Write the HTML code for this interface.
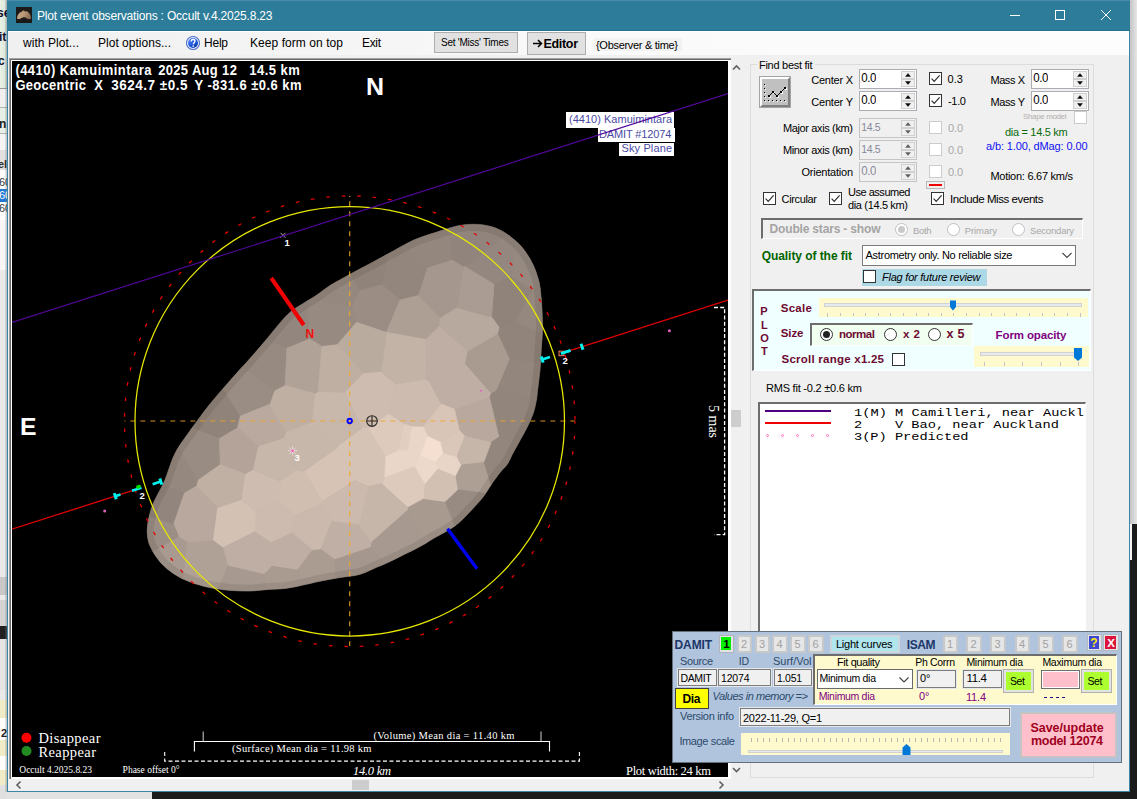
<!DOCTYPE html>
<html><head><meta charset="utf-8"><title>Plot event observations : Occult v.4.2025.8.23</title>
<style>
html,body{margin:0;padding:0;background:#1a1a1a;}
#root{position:relative;width:1137px;height:799px;overflow:hidden;font-family:"Liberation Sans",sans-serif;font-size:11px;color:#000;background:#1b1b1b;}
#root div,#root span,#root svg{position:absolute;box-sizing:border-box;}
#root span{white-space:pre;}

.b{border:1px solid #adadad;background:#e1e1e1;}
.ud{background:#fff;border:1px solid #abadb3;}
.udd{background:#f0f0f0;border:1px solid #c4c4c4;}
.sp{background:#f0f0f0;border:1px solid #d0d0d0;}
.cb{width:13px;height:13px;background:#fff;border:1px solid #333;}
.cbd{width:13px;height:13px;background:#fff;border:1px solid #ccc;}
.rb{width:13px;height:13px;background:#fff;border:1px solid #333;border-radius:50%;}
.rbd{width:13px;height:13px;background:#fff;border:1px solid #c0c0c0;border-radius:50%;}
.sunk{border-style:solid;border-width:2px 1px 1px 2px;border-color:#6d6d6d #fff #fff #6d6d6d;}
.tk{background:#c4c4c4;width:1px;}
.tb{background:#f0f0f0;border:1px solid #7c7c7c;box-shadow:0 0 0 1px #e4e7ec;}
.nb{background:#e6e6e6;border:2px solid #c6c8ca;}

</style></head><body><div id="root">
<div style="left:1130px;top:0px;width:7px;height:524px;background:linear-gradient(to right,#c4c4c4,#e6e6e6);"></div>
<div style="left:1130px;top:524px;width:2px;height:36px;background:#f4f4f4;"></div>
<div style="left:0px;top:792px;width:152px;height:7px;background:#e2e2e2;"></div>
<div style="left:0px;top:0px;width:7px;height:799px;background:#e9e9e9;"></div>
<div style="left:0px;top:0px;width:7px;height:88px;background:linear-gradient(to right,#eaf2e6,#dfe8dc 70%,#c8d4cc);"></div>
<div style="left:0px;top:88px;width:7px;height:1px;background:#9a9a9a;"></div>
<div style="left:0px;top:89px;width:7px;height:18px;background:#efefef;"></div>
<div style="left:0px;top:107px;width:7px;height:1px;background:#b0b0b0;"></div>
<div style="left:0px;top:108px;width:7px;height:25px;background:#e8efe4;"></div>
<div style="left:0px;top:133px;width:7px;height:1px;background:#b0b0b0;"></div>
<div style="left:0px;top:134px;width:7px;height:16px;background:#f4f4f4;"></div>
<div style="left:0px;top:150px;width:7px;height:20px;background:#e0e0e0;"></div>
<div style="left:0px;top:170px;width:7px;height:19px;background:#fff;"></div>
<div style="left:0px;top:189px;width:7px;height:13px;background:#1e78d2;"></div>
<div style="left:0px;top:202px;width:7px;height:18px;background:#fff;"></div>
<div style="left:0px;top:220px;width:7px;height:50px;background:#f6f6f6;"></div>
<div style="left:0px;top:577px;width:7px;height:18px;background:#c8c8c8;"></div>
<div style="left:0px;top:600px;width:7px;height:26px;background:#d4d4d4;"></div>
<div style="left:0px;top:626px;width:7px;height:13px;background:#202020;"></div>
<div style="left:0px;top:639px;width:7px;height:51px;background:#e4e4e4;"></div>
<div style="left:0px;top:700px;width:7px;height:18px;background:#f0ecc8;"></div>
<div style="left:0px;top:718px;width:7px;height:22px;background:#fff;"></div>
<div style="left:0px;top:740px;width:7px;height:16px;background:#f0ecc8;"></div>
<div style="left:0px;top:756px;width:7px;height:14px;background:#fff;"></div>
<div style="left:0px;top:770px;width:7px;height:15px;background:#f0ecc8;"></div>
<div style="left:0px;top:785px;width:7px;height:14px;background:#e0e0e0;"></div>
<div style="left:5px;top:0px;width:2px;height:792px;background:linear-gradient(to right,rgba(120,130,130,0.15),rgba(110,120,120,0.45));"></div>
<span style="left:-3.00px;top:7.00px;font-size:12px;line-height:12px;font-weight:bold;color:#101030;">se</span>
<span style="left:-1.00px;top:31.00px;font-size:12px;line-height:12px;font-weight:bold;color:#101030;">it</span>
<span style="left:-2.00px;top:55.00px;font-size:12px;line-height:12px;font-weight:bold;color:#101030;">c</span>
<span style="left:-1.00px;top:118.00px;font-size:12px;line-height:12px;font-weight:bold;color:#202020;">n</span>
<span style="left:-2.00px;top:159.00px;font-size:11px;line-height:11px;font-weight:bold;color:#303030;">eli</span>
<span style="left:-1.00px;top:177.00px;font-size:11px;line-height:11px;color:#333;">60</span>
<span style="left:-1.00px;top:190.00px;font-size:11px;line-height:11px;color:#fff;">60</span>
<span style="left:-1.00px;top:203.00px;font-size:11px;line-height:11px;color:#333;">60</span>
<span style="left:1.00px;top:728.00px;font-size:11px;line-height:11px;font-weight:bold;color:#222;">2</span>
<div style="left:7px;top:0px;width:1123px;height:792px;background:#f0f0f0;border:1px solid #3b86a6;border-top:none;"></div>
<div style="left:7px;top:0px;width:1123px;height:31px;background:#2d7d9a;"></div>
<div style="left:7px;top:0px;width:1123px;height:1px;background:#4a8da8;"></div>
<div style="left:8px;top:30px;width:1121px;height:1px;background:#24728f;"></div>
<svg style="left:16px;top:7px" width="16" height="16" viewBox="0 0 16 16"><defs><linearGradient id="ig" x1="0" y1="0" x2="1" y2="0.3"><stop offset="0" stop-color="#c9aa88"/><stop offset="0.6" stop-color="#b89674"/><stop offset="1" stop-color="#8e7058"/></linearGradient></defs><rect width="16" height="16" fill="#1b1a18"/><path d="M1 10.500C1.500 7 4 5 6 4.500C7 3 8.500 3 9 4.800C10 4 11.500 4 12.500 5.500C14 7 15 9 15 11C14.500 12.500 12.500 12.500 11 11.500C9.500 10.500 8.500 10 7 10.500C5 11.500 3.500 12.500 2 12C1 11.800 0.800 11 1 10.500Z" fill="url(#ig)"/></svg>
<span style="left:37.00px;top:10.00px;font-size:12px;line-height:12px;color:#fff;letter-spacing:-0.187px;">Plot event observations : Occult v.4.2025.8.23</span>
<svg style="left:1000px;top:0" width="129" height="31" viewBox="1000 0 129 31" fill="none" stroke="#fff" stroke-width="1"><path d="M1010 15.5h10"/><rect x="1055.5" y="10.5" width="9" height="9"/><path d="M1101 10l10 10M1111 10l-10 10"/></svg>
<div style="left:8px;top:31px;width:1121px;height:24px;background:linear-gradient(to right,#f0f0f0 0%,#f5f5f5 30%,#fafafa 55%,#fdfdfd 100%);"></div>
<div style="left:8px;top:31px;width:1121px;height:1px;background:#fff;"></div>
<span style="left:23.00px;top:37.00px;font-size:12px;line-height:12px;letter-spacing:0.058px;">with Plot...</span>
<span style="left:98.00px;top:37.00px;font-size:12px;line-height:12px;letter-spacing:0.020px;">Plot options...</span>
<svg style="left:186px;top:36px" width="14" height="14" viewBox="0 0 14 14"><defs><linearGradient id="hg" x1="0.15" y1="0.1" x2="0.85" y2="0.9"><stop offset="0" stop-color="#4f83f6"/><stop offset="0.55" stop-color="#1f55dc"/><stop offset="1" stop-color="#0c3aa8"/></linearGradient></defs><circle cx="7" cy="7" r="6.500" fill="#eaf0fc" stroke="#5273c8" stroke-width="1.100"/><circle cx="7" cy="7" r="5" fill="url(#hg)"/><path d="M5.200 5.400c0-1.200.800-1.900 1.900-1.900s1.900.700 1.900 1.700c0 1.400-1.700 1.500-1.700 3" fill="none" stroke="#fff" stroke-width="1.350"/><circle cx="7.200" cy="10" r="0.850" fill="#fff"/></svg>
<span style="left:204.00px;top:37.00px;font-size:12px;line-height:12px;letter-spacing:-0.229px;">Help</span>
<span style="left:250.00px;top:37.00px;font-size:12px;line-height:12px;letter-spacing:0.062px;">Keep form on top</span>
<span style="left:362.00px;top:37.00px;font-size:12px;line-height:12px;letter-spacing:-0.339px;">Exit</span>
<div class="b" style="left:434px;top:32px;width:84px;height:21px"></div>
<span style="left:441.00px;top:38.00px;font-size:10px;line-height:10px;letter-spacing:-0.261px;">Set 'Miss' Times</span>
<div class="b" style="left:527px;top:32px;width:59px;height:23px"></div>
<svg style="left:532px;top:37px" width="12" height="12" viewBox="532 37 12 12"><path d="M533 43.500h8M538 40l3.500 3.500l-3.500 3.500" fill="none" stroke="#000" stroke-width="1.500"/></svg>
<span style="left:543.50px;top:38.00px;font-size:12.5px;line-height:12.5px;font-weight:bold;letter-spacing:-0.322px;">Editor</span>
<div style="left:594px;top:38px;width:88px;height:13px;background:#f2f2f2;"></div>
<span style="left:596.00px;top:40.00px;font-size:11.0px;line-height:11.0px;letter-spacing:-0.302px;">{Observer &amp; time}</span>
<div style="left:9px;top:58px;width:722px;height:721px;background:#fff;border-left:1px solid #a0a0a0;border-top:1px solid #a0a0a0;"></div>
<div style="left:10px;top:59px;width:721px;height:720px;background:#fff;border-left:1px solid #696969;border-top:1px solid #696969;"></div>
<div style="left:12px;top:61px;width:716px;height:716px;background:#000;"></div>
<svg style="left:12px;top:61px" width="716" height="716" viewBox="12 61 716 716"><defs><clipPath id="ast"><path d="M165,480 166.9,474.7 168.9,468.9 170.8,463.5 172.6,458.8 174.5,454.5 176.8,450 179.9,445.1 183.4,440 187,435 190.5,430.1 194,425.3 197.5,420.5 200.9,415.9 204.3,411.3 208,406.5 212.1,401.5 216.5,396.3 221,391 225.6,385.7 230.2,380.4 235,375 239.9,369.6 244.9,364.2 250,358.5 255.3,352.4 260.8,346.1 266,340 270.9,334 275.6,328.2 280,323 283.8,318.6 287.3,314.9 291,311.5 295.2,308.4 299.5,305.7 304,303 308.5,300.2 313.1,297.4 317.6,294.5 321.6,291.6 325.4,288.7 330,285.5 335.9,282.1 342.5,278.4 349.5,274.6 356.9,270.6 364.6,266.5 372.2,262.5 379.4,258.6 386.3,254.8 393.3,251 400.3,247.1 407.4,243.2 414.4,239.8 421.6,237 428.8,234.6 435.5,232.5 441.6,230.5 447.3,228.7 452.5,227.2 457,226.1 461,225.3 465,224.8 469.2,224.4 473.3,224.3 477.5,224.4 481.8,224.8 486,225.4 490,226.3 493.5,227.3 496.8,228.5 500,230 503.3,231.8 506.7,233.9 510,236.3 513.4,239 516.8,241.9 520,245 522.8,248.2 525.3,251.6 527.6,255 529.7,258.3 531.5,261.7 533.2,265 534.6,268.3 535.9,271.5 537,275 538.1,278.4 539.1,282.1 540,287 540.8,294 541.5,302.1 542,310 542.3,316.9 542.5,323.4 542.5,330 542.2,336.7 541.7,343.3 541.2,350 540.9,356.7 540.5,363.3 540,370 539.2,377 538.4,384.1 537.6,390 537.2,394 536.9,396.9 536.4,400 535.7,403.7 534.9,407.6 533.9,411.3 532.7,414.7 531.4,418 530,421.3 528.5,424.6 526.8,427.9 525,431.3 523,435 520.9,438.8 518.8,442.6 516.7,446.4 514.6,450.2 512.6,453.8 510.9,457.3 509.4,460.6 507.6,463.8 505.3,466.8 502.6,469.6 500,472.6 497.6,475.7 495.2,478.9 492.6,482.6 489.7,487.1 486.5,492.1 483.1,497 479.3,501.6 475.2,506.1 471.1,510.5 467,514.8 463,519 459.1,522.6 455.6,525.4 452.3,527.7 448.6,530 444.3,532.5 439.8,535 435,537.6 430.1,540.6 425.1,543.7 420,546.6 415,549.2 410,551.7 405,554.1 399.9,556.7 394.9,559.2 390,561.6 385.6,563.6 381.3,565.4 376.6,567.3 371.2,569.8 365.3,572.4 359.5,574.5 353.9,575.7 348.2,576.4 342.3,577.2 335.9,578.3 329.3,579.4 322.6,580.7 315.9,582.1 309.2,583.7 302.8,585.1 297,586.4 291.4,587.5 285.6,588.4 279,589 272.2,589.3 265.8,589.7 260.4,590.2 255.4,590.7 250,591 243.8,591 237.3,590.8 231,590.4 225.3,589.9 219.9,589.2 214.6,588.4 209.4,587.5 204.4,586.4 199.6,585.1 194.9,583.7 190.4,582.1 186,580.3 181.8,578.4 177.8,576.2 174,573.9 170.3,571.3 166.7,568.5 163.5,565.6 160.7,562.7 158.2,559.6 156,556.6 154,553.6 152.3,550.6 150.8,547.6 149.5,544.7 148.5,541.7 147.8,538.6 147.4,535.2 147.2,531.7 147.3,528 147.7,524.1 148.4,520.1 149.3,516 150.3,512 151.5,508 153,504 154.8,500 156.9,496 159,492 161,488.2 163,484.3Z"/></clipPath></defs><path d="M165,480 166.9,474.7 168.9,468.9 170.8,463.5 172.6,458.8 174.5,454.5 176.8,450 179.9,445.1 183.4,440 187,435 190.5,430.1 194,425.3 197.5,420.5 200.9,415.9 204.3,411.3 208,406.5 212.1,401.5 216.5,396.3 221,391 225.6,385.7 230.2,380.4 235,375 239.9,369.6 244.9,364.2 250,358.5 255.3,352.4 260.8,346.1 266,340 270.9,334 275.6,328.2 280,323 283.8,318.6 287.3,314.9 291,311.5 295.2,308.4 299.5,305.7 304,303 308.5,300.2 313.1,297.4 317.6,294.5 321.6,291.6 325.4,288.7 330,285.5 335.9,282.1 342.5,278.4 349.5,274.6 356.9,270.6 364.6,266.5 372.2,262.5 379.4,258.6 386.3,254.8 393.3,251 400.3,247.1 407.4,243.2 414.4,239.8 421.6,237 428.8,234.6 435.5,232.5 441.6,230.5 447.3,228.7 452.5,227.2 457,226.1 461,225.3 465,224.8 469.2,224.4 473.3,224.3 477.5,224.4 481.8,224.8 486,225.4 490,226.3 493.5,227.3 496.8,228.5 500,230 503.3,231.8 506.7,233.9 510,236.3 513.4,239 516.8,241.9 520,245 522.8,248.2 525.3,251.6 527.6,255 529.7,258.3 531.5,261.7 533.2,265 534.6,268.3 535.9,271.5 537,275 538.1,278.4 539.1,282.1 540,287 540.8,294 541.5,302.1 542,310 542.3,316.9 542.5,323.4 542.5,330 542.2,336.7 541.7,343.3 541.2,350 540.9,356.7 540.5,363.3 540,370 539.2,377 538.4,384.1 537.6,390 537.2,394 536.9,396.9 536.4,400 535.7,403.7 534.9,407.6 533.9,411.3 532.7,414.7 531.4,418 530,421.3 528.5,424.6 526.8,427.9 525,431.3 523,435 520.9,438.8 518.8,442.6 516.7,446.4 514.6,450.2 512.6,453.8 510.9,457.3 509.4,460.6 507.6,463.8 505.3,466.8 502.6,469.6 500,472.6 497.6,475.7 495.2,478.9 492.6,482.6 489.7,487.1 486.5,492.1 483.1,497 479.3,501.6 475.2,506.1 471.1,510.5 467,514.8 463,519 459.1,522.6 455.6,525.4 452.3,527.7 448.6,530 444.3,532.5 439.8,535 435,537.6 430.1,540.6 425.1,543.7 420,546.6 415,549.2 410,551.7 405,554.1 399.9,556.7 394.9,559.2 390,561.6 385.6,563.6 381.3,565.4 376.6,567.3 371.2,569.8 365.3,572.4 359.5,574.5 353.9,575.7 348.2,576.4 342.3,577.2 335.9,578.3 329.3,579.4 322.6,580.7 315.9,582.1 309.2,583.7 302.8,585.1 297,586.4 291.4,587.5 285.6,588.4 279,589 272.2,589.3 265.8,589.7 260.4,590.2 255.4,590.7 250,591 243.8,591 237.3,590.8 231,590.4 225.3,589.9 219.9,589.2 214.6,588.4 209.4,587.5 204.4,586.4 199.6,585.1 194.9,583.7 190.4,582.1 186,580.3 181.8,578.4 177.8,576.2 174,573.9 170.3,571.3 166.7,568.5 163.5,565.6 160.7,562.7 158.2,559.6 156,556.6 154,553.6 152.3,550.6 150.8,547.6 149.5,544.7 148.5,541.7 147.8,538.6 147.4,535.2 147.2,531.7 147.3,528 147.7,524.1 148.4,520.1 149.3,516 150.3,512 151.5,508 153,504 154.8,500 156.9,496 159,492 161,488.2 163,484.3Z" fill="#a89a8e" stroke="#5a524c" stroke-width="1"/><g clip-path="url(#ast)" stroke-width="0.8" stroke-linejoin="round"><path d="M223.6,547.6 213.4,540 186.9,542 177.1,620.4 198.5,630.6 200.6,631 228.3,565.3Z" fill="#b0a196" stroke="#b0a196"/><path d="M285.5,432.8 269.1,404.5 274.4,390.2 285.2,384.8 315.5,393.1 312.5,422.1Z" fill="#bfafa3" stroke="#bfafa3"/><path d="M418,294.8 440.6,318.1 439.3,326.2 425.9,339.6 386.5,332.4 386,331.4 399.4,299.4Z" fill="#ae9f95" stroke="#ae9f95"/><path d="M196.1,485.5 183.7,492.8 173.1,523.6 178.7,537.1 186.9,542 213.4,540 217.8,507.5Z" fill="#b8a89d" stroke="#b8a89d"/><path d="M388.7,414.2 403.9,424.2 412,426.8 423.3,427.1 441.4,404 429.3,381.2 425.4,379 395.6,383.9Z" fill="#cdbbaf" stroke="#cdbbaf"/><path d="M464.8,436.2 491,442.6 499.6,436.8 490,396.5 454.4,409.3 459.3,430.6Z" fill="#b8a89d" stroke="#b8a89d"/><path d="M363.2,372.9 344.5,392.2 362,428 368.5,427.9 388.7,414.2 395.6,383.9 380.8,371.3Z" fill="#cdbcaf" stroke="#cdbcaf"/><path d="M217.8,507.5 213.4,540 223.6,547.6 255.5,531.6 256.2,512.1 241.1,499.6Z" fill="#d3c1b4" stroke="#d3c1b4"/><path d="M494,284.3 464.8,266.5 515.6,227.2 512.1,276.8Z" fill="#94877f" stroke="#94877f"/><path d="M357.1,321.7 351.7,306.1 306.9,298.1 308.8,338.4 322,346.5 337.2,344.8Z" fill="#978a81" stroke="#978a81"/><path d="M491.5,316.9 494,284.3 512.1,276.8 532.9,290.5 515.5,321.8 499.2,327.4Z" fill="#8f837a" stroke="#8f837a"/><path d="M322.3,501.4 355,480.5 337.5,447.2 303.9,471.2Z" fill="#d6c3b6" stroke="#d6c3b6"/><path d="M178.7,537.1 118.8,571.7 107.5,559.2 96.6,531.6 95,501 95.5,499 173.1,523.6Z" fill="#9b8e84" stroke="#9b8e84"/><path d="M418,294.8 440.6,318.1 457.2,307.7 464.2,266.5 452.4,259.2 426.8,267.6Z" fill="#a6978e" stroke="#a6978e"/><path d="M244.7,473.9 252.5,469.6 280.7,481.2 278.3,500.8 256.2,512.1 241.1,499.6Z" fill="#cebcb0" stroke="#cebcb0"/><path d="M331.6,520.8 358.9,524.3 371.5,542.5 371.5,547.3 334.7,559.8 320.2,548.9Z" fill="#bfafa4" stroke="#bfafa4"/><path d="M228.3,565.3 200.6,631 222.7,645 249.8,652.9 268.3,653.3 264.7,573.9Z" fill="#a7998f" stroke="#a7998f"/><path d="M499.2,327.4 497.5,333.6 509.7,360.1 598.1,365.5 598.2,364.9 597.8,357.9 515.5,321.8Z" fill="#90847b" stroke="#90847b"/><path d="M414.7,465.9 384.8,477.1 381.6,483.8 407.8,507.7 424.3,498.7 425.3,484.2Z" fill="#ddcabd" stroke="#ddcabd"/><path d="M197.5,480.7 157.9,413.8 219.3,437.8 220.3,464.6Z" fill="#998c82" stroke="#998c82"/><path d="M418,294.8 426.8,267.6 389.3,239.7 381.8,284.5 399.4,299.4Z" fill="#92867d" stroke="#92867d"/><path d="M368.5,427.9 385.9,455.9 384.8,477.1 381.6,483.8 368.5,486.4 355,480.5 337.5,447.2 337.7,445.9 362,428Z" fill="#d5c3b6" stroke="#d5c3b6"/><path d="M252.5,469.6 280.7,481.2 296.8,470.1 283.3,437.8 257.9,446Z" fill="#c7b6aa" stroke="#c7b6aa"/><path d="M274.4,390.2 183.3,326 163.1,304.4 163.8,303.3 287,347.5 285.2,384.8Z" fill="#978a81" stroke="#978a81"/><path d="M389.3,239.7 356.4,172.4 357.2,172 383.1,164.5 410.1,162.2 436.8,165.7 446.6,169.5 452.4,259.2 426.8,267.6Z" fill="#94877e" stroke="#94877e"/><path d="M455.1,476.3 461.1,464.3 484,461.6 494.4,494.6 457.5,489.7Z" fill="#ad9f94" stroke="#ad9f94"/><path d="M445.1,501.4 485,597.6 474.7,604.7 460.6,611 407.5,510.4 407.8,507.7 424.3,498.7Z" fill="#a99a90" stroke="#a99a90"/><path d="M220.3,464.6 219.3,437.8 237.7,426.9 257.9,446 252.5,469.6 244.7,473.9Z" fill="#b3a399" stroke="#b3a399"/><path d="M429.3,381.2 441.4,404 454.4,409.3 490,396.5 491.5,393.6 465.5,363.7Z" fill="#beaea3" stroke="#beaea3"/><path d="M196.1,485.5 217.8,507.5 241.1,499.6 244.7,473.9 220.3,464.6 197.5,480.7Z" fill="#c0b0a4" stroke="#c0b0a4"/><path d="M296.8,470.1 303.9,471.2 322.3,501.4 321.7,504.1 294.5,515.6 278.3,500.8 280.7,481.2Z" fill="#d0beb1" stroke="#d0beb1"/><path d="M271.1,541.9 291.9,532.3 312.8,549.8 297.4,570.2 272.2,566.3Z" fill="#bfaea3" stroke="#bfaea3"/><path d="M439.3,326.2 468.1,350.8 465.5,363.7 429.3,381.2 425.4,379 425.9,339.6Z" fill="#beaea3" stroke="#beaea3"/><path d="M362,428 337.7,445.9 312.5,422.1 315.5,393.1 318,391.4 344.5,392.2Z" fill="#c8b7ab" stroke="#c8b7ab"/><path d="M322,346.5 308.8,338.4 287,347.5 285.2,384.8 315.5,393.1 318,391.4Z" fill="#b1a297" stroke="#b1a297"/><path d="M468.1,350.8 497.5,333.6 509.7,360.1 496.8,390.6 491.5,393.6 465.5,363.7Z" fill="#aa9b91" stroke="#aa9b91"/><path d="M219.3,437.8 157.9,413.8 118.8,382.5 121.6,369.6 130.5,347.5 142.7,327.3 157.5,309.5 163.1,304.4 183.3,326 240.4,416.1 237.7,426.9Z" fill="#8f837a" stroke="#8f837a"/><path d="M407.5,510.4 371.5,542.5 358.9,524.3 368.5,486.4 381.6,483.8 407.8,507.7Z" fill="#c6b5a9" stroke="#c6b5a9"/><path d="M381.8,284.5 359.2,290.8 301.9,185.5 309.6,181.8 332.9,175 356.4,172.4 389.3,239.7Z" fill="#8f837a" stroke="#8f837a"/><path d="M425.9,339.6 425.4,379 395.6,383.9 380.8,371.3 386.5,332.4Z" fill="#c3b3a7" stroke="#c3b3a7"/><path d="M386,331.4 357.1,321.7 337.2,344.8 363.2,372.9 380.8,371.3 386.5,332.4Z" fill="#baab9f" stroke="#baab9f"/><path d="M363.2,372.9 344.5,392.2 318,391.4 322,346.5 337.2,344.8Z" fill="#bfafa3" stroke="#bfafa3"/><path d="M196.1,485.5 183.7,492.8 96.5,461.8 96.2,444.4 101.6,417.8 112.1,392.8 118.8,382.5 157.9,413.8 197.5,480.7Z" fill="#95887f" stroke="#95887f"/><path d="M283.3,437.8 285.5,432.8 312.5,422.1 337.7,445.9 337.5,447.2 303.9,471.2 296.8,470.1Z" fill="#c7b6aa" stroke="#c7b6aa"/><path d="M460.6,611 452.8,616.6 430.3,627.1 427.4,627.8 371.5,547.3 371.5,542.5 407.5,510.4Z" fill="#a7998f" stroke="#a7998f"/><path d="M399.4,299.4 386,331.4 357.1,321.7 351.7,306.1 359.2,290.8 381.8,284.5Z" fill="#9b8d84" stroke="#9b8d84"/><path d="M371.5,547.3 334.7,559.8 337.4,652.7 358,653.8 383.7,649.6 408,640.2 427.4,627.8Z" fill="#a5978d" stroke="#a5978d"/><path d="M440.6,318.1 457.2,307.7 491.5,316.9 499.2,327.4 497.5,333.6 468.1,350.8 439.3,326.2Z" fill="#b8a99e" stroke="#b8a99e"/><path d="M484,461.6 491,442.6 499.6,436.8 585.7,459.3 585.1,469.3 578.3,494.6 566.3,517.8 549.7,537.9 547.7,539.6 494.4,494.6Z" fill="#92867d" stroke="#92867d"/><path d="M496.8,390.6 595.5,412.6 599.3,391.7 598.1,365.5 509.7,360.1Z" fill="#92867d" stroke="#92867d"/><path d="M457.5,489.7 445.1,501.4 485,597.6 496.8,592.4 517.8,577.8 535.4,559.2 547.7,539.6 494.4,494.6Z" fill="#988b82" stroke="#988b82"/><path d="M308.8,338.4 287,347.5 163.8,303.3 168.5,290.4 179.2,270.7 192.7,252.7 208.8,236.8 227.1,223.5 247.3,213.2 247.9,212.9 306.9,298.1Z" fill="#93867e" stroke="#93867e"/><path d="M464.2,266.5 464.8,266.5 515.6,227.2 526.7,206 516.2,193.6 492.3,178.2 464.7,170 446.6,169.5 452.4,259.2Z" fill="#91847c" stroke="#91847c"/><path d="M441,442.6 459.3,430.6 454.4,409.3 441.4,404 423.3,427.1 427.6,436.4Z" fill="#d8c5b8" stroke="#d8c5b8"/><path d="M496.8,390.6 595.5,412.6 595.9,418.1 591.6,444.1 585.7,459.3 499.6,436.8 490,396.5 491.5,393.6Z" fill="#92857c" stroke="#92857c"/><path d="M274.4,390.2 183.3,326 240.4,416.1 269.1,404.5Z" fill="#9a8d83" stroke="#9a8d83"/><path d="M271.1,541.9 272.2,566.3 264.7,573.9 228.3,565.3 223.6,547.6 255.5,531.6Z" fill="#beaea3" stroke="#beaea3"/><path d="M403.9,424.2 412,426.8 407.9,450.8 397.3,450.5Z" fill="#e2cec1" stroke="#e2cec1"/><path d="M257.9,446 237.7,426.9 240.4,416.1 269.1,404.5 285.5,432.8 283.3,437.8Z" fill="#b9a99e" stroke="#b9a99e"/><path d="M301.9,185.5 287.4,189.9 266.3,200.1 247.9,212.9 306.9,298.1 351.7,306.1 359.2,290.8Z" fill="#95887f" stroke="#95887f"/><path d="M312.8,549.8 297.4,570.2 329.3,653.5 332,653.7 337.4,652.7 334.7,559.8 320.2,548.9Z" fill="#ab9c92" stroke="#ab9c92"/><path d="M512.1,276.8 515.6,227.2 526.7,206 539.7,210.3 563.8,227.8 580.3,252.2 587.6,280.3 532.9,290.5Z" fill="#958980" stroke="#958980"/><path d="M271.1,541.9 291.9,532.3 294.5,515.6 278.3,500.8 256.2,512.1 255.5,531.6Z" fill="#cdbbaf" stroke="#cdbbaf"/><path d="M272.2,566.3 297.4,570.2 329.3,653.5 305,657.8 277.7,656.2 268.3,653.3 264.7,573.9Z" fill="#aa9b91" stroke="#aa9b91"/><path d="M178.7,537.1 118.8,571.7 123.8,584.1 144,606 171.3,619.6 177.1,620.4 186.9,542Z" fill="#a89a90" stroke="#a89a90"/><path d="M173.1,523.6 95.5,499 94.4,472.1 96.5,461.8 183.7,492.8Z" fill="#92857d" stroke="#92857d"/><path d="M515.5,321.8 597.8,357.9 601.6,336.3 598.9,307.5 588.3,281 587.6,280.3 532.9,290.5Z" fill="#95887f" stroke="#95887f"/><path d="M491.5,316.9 457.2,307.7 464.2,266.5 464.8,266.5 494,284.3Z" fill="#aa9c92" stroke="#aa9c92"/><path d="M294.5,515.6 321.7,504.1 331.6,520.8 320.2,548.9 312.8,549.8 291.9,532.3Z" fill="#cab9ac" stroke="#cab9ac"/><path d="M321.7,504.1 322.3,501.4 355,480.5 368.5,486.4 358.9,524.3 331.6,520.8Z" fill="#cbbaad" stroke="#cbbaad"/><path d="M427.6,436.4 423.3,427.1 412,426.8 407.9,450.8 418.3,457.7 420.1,456.7Z" fill="#ead6c8" stroke="#ead6c8"/><path d="M441,442.6 443.6,452.8 435.8,461.9 420.1,456.7 427.6,436.4Z" fill="#f4dfd1" stroke="#f4dfd1"/><path d="M443.6,452.8 457.1,456.7 461.1,464.3 455.1,476.3 438,469.2 435.8,461.9Z" fill="#e8d5c7" stroke="#e8d5c7"/><path d="M420.1,456.7 418.3,457.7 414.7,465.9 425.3,484.2 438,469.2 435.8,461.9Z" fill="#edd9cb" stroke="#edd9cb"/><path d="M418.3,457.7 407.9,450.8 397.3,450.5 385.9,455.9 384.8,477.1 414.7,465.9Z" fill="#ead6c8" stroke="#ead6c8"/><path d="M441,442.6 459.3,430.6 464.8,436.2 457.1,456.7 443.6,452.8Z" fill="#dac7ba" stroke="#dac7ba"/><path d="M455.1,476.3 438,469.2 425.3,484.2 424.3,498.7 445.1,501.4 457.5,489.7Z" fill="#d2c0b3" stroke="#d2c0b3"/><path d="M368.5,427.9 385.9,455.9 397.3,450.5 403.9,424.2 388.7,414.2Z" fill="#ddcabd" stroke="#ddcabd"/><path d="M461.1,464.3 457.1,456.7 464.8,436.2 491,442.6 484,461.6Z" fill="#c6b5a9" stroke="#c6b5a9"/><path d="M165,480 166.9,474.7 168.9,468.9 170.8,463.5 172.6,458.8 174.5,454.5 176.8,450 179.9,445.1 183.4,440 187,435 190.5,430.1 194,425.3 197.5,420.5 200.9,415.9 204.3,411.3 208,406.5 212.1,401.5 216.5,396.3 221,391 225.6,385.7 230.2,380.4 235,375 239.9,369.6 244.9,364.2 250,358.5 255.3,352.4 260.8,346.1 266,340 270.9,334 275.6,328.2 280,323 283.8,318.6 287.3,314.9 291,311.5 295.2,308.4 299.5,305.7 304,303 308.5,300.2 313.1,297.4 317.6,294.5 321.6,291.6 325.4,288.7 330,285.5 335.9,282.1 342.5,278.4 349.5,274.6 356.9,270.6 364.6,266.5 372.2,262.5 379.4,258.6 386.3,254.8 393.3,251 400.3,247.1 407.4,243.2 414.4,239.8 421.6,237 428.8,234.6 435.5,232.5 441.6,230.5 447.3,228.7 452.5,227.2 457,226.1 461,225.3 465,224.8 469.2,224.4 473.3,224.3 477.5,224.4 481.8,224.8 486,225.4 490,226.3 493.5,227.3 496.8,228.5 500,230 503.3,231.8 506.7,233.9 510,236.3 513.4,239 516.8,241.9 520,245 522.8,248.2 525.3,251.6 527.6,255 529.7,258.3 531.5,261.7 533.2,265 534.6,268.3 535.9,271.5 537,275 538.1,278.4 539.1,282.1 540,287 540.8,294 541.5,302.1 542,310 542.3,316.9 542.5,323.4 542.5,330 542.2,336.7 541.7,343.3 541.2,350 540.9,356.7 540.5,363.3 540,370 539.2,377 538.4,384.1 537.6,390 537.2,394 536.9,396.9 536.4,400 535.7,403.7 534.9,407.6 533.9,411.3 532.7,414.7 531.4,418 530,421.3 528.5,424.6 526.8,427.9 525,431.3 523,435 520.9,438.8 518.8,442.6 516.7,446.4 514.6,450.2 512.6,453.8 510.9,457.3 509.4,460.6 507.6,463.8 505.3,466.8 502.6,469.6 500,472.6 497.6,475.7 495.2,478.9 492.6,482.6 489.7,487.1 486.5,492.1 483.1,497 479.3,501.6 475.2,506.1 471.1,510.5 467,514.8 463,519 459.1,522.6 455.6,525.4 452.3,527.7 448.6,530 444.3,532.5 439.8,535 435,537.6 430.1,540.6 425.1,543.7 420,546.6 415,549.2 410,551.7 405,554.1 399.9,556.7 394.9,559.2 390,561.6 385.6,563.6 381.3,565.4 376.6,567.3 371.2,569.8 365.3,572.4 359.5,574.5 353.9,575.7 348.2,576.4 342.3,577.2 335.9,578.3 329.3,579.4 322.6,580.7 315.9,582.1 309.2,583.7 302.8,585.1 297,586.4 291.4,587.5 285.6,588.4 279,589 272.2,589.3 265.8,589.7 260.4,590.2 255.4,590.7 250,591 243.8,591 237.3,590.8 231,590.4 225.3,589.9 219.9,589.2 214.6,588.4 209.4,587.5 204.4,586.4 199.6,585.1 194.9,583.7 190.4,582.1 186,580.3 181.8,578.4 177.8,576.2 174,573.9 170.3,571.3 166.7,568.5 163.5,565.6 160.7,562.7 158.2,559.6 156,556.6 154,553.6 152.3,550.6 150.8,547.6 149.5,544.7 148.5,541.7 147.8,538.6 147.4,535.2 147.2,531.7 147.3,528 147.7,524.1 148.4,520.1 149.3,516 150.3,512 151.5,508 153,504 154.8,500 156.9,496 159,492 161,488.2 163,484.3Z" fill="none" stroke="#30241c" stroke-opacity="0.11" stroke-width="13"/></g><g stroke="#f2a722" stroke-opacity="0.86" stroke-width="1.2" fill="none"><path d="M124.500 421h1 M130.300 421H575" stroke-dasharray="5 5"/><path d="M349.700 196v1" /><path d="M349.700 201.200V646" stroke-dasharray="5 5"/></g><circle cx="349.750" cy="421.250" r="214.750" fill="none" stroke="#e8e800" stroke-width="1.250"/><circle cx="349.750" cy="421.250" r="225.250" fill="none" stroke="#e60000" stroke-width="1.300" stroke-dasharray="3.600 11.900" stroke-dashoffset="1"/><path d="M11.0 529.5L137.0 489.2M562.0 353.2L728.0 300.1" stroke="#e00000" stroke-width="1.300" fill="none"/><path d="M114.5 496.4L120.5 494.5M132.0 490.8L141.5 487.7M152.6 484.2L161.6 481.3M541.4 359.8L550.0 357.0M561.0 353.5L570.5 350.5" stroke="#00f0f0" stroke-width="2.600" fill="none"/><path d="M114.3 493.1L116.3 499.2M159.8 478.5L161.8 484.6M541.2 356.5L543.2 362.6M581.0 343.7L583.0 349.8" stroke="#00f0f0" stroke-width="3" fill="none"/><ellipse cx="138.500" cy="486.800" rx="2.600" ry="1.800" fill="#00d800" transform="rotate(-18 138.5 486.8)"/><rect x="559" y="351.200" width="5" height="4.500" fill="none" stroke="#ff7f60" stroke-width="1"/><path d="M561.0 353.5L570.5 350.5" stroke="#00f0f0" stroke-width="2.600" fill="none"/><path d="M271.250 278L303.750 325" stroke="#f00000" stroke-width="4" fill="none"/><path d="M447.500 528.750L477 568.750" stroke="#0000f0" stroke-width="3.400" fill="none"/><circle cx="349.700" cy="421" r="2.200" fill="none" stroke="#0000ff" stroke-width="1.900"/><g stroke="#2e2a28" stroke-width="1.150" fill="none"><circle cx="372" cy="421" r="5.300"/><path d="M366.700 421h10.600M372 415.700v10.600"/></g><g fill="#e060c0"><circle cx="104.700" cy="511" r="1.500"/><circle cx="669.400" cy="330.800" r="1.500"/><circle cx="481" cy="390.800" r="1"/></g><g stroke="#f4e4ec" stroke-width="0.700"><path d="M288 450.750h9M292.500 446.250v9M289.300 447.550l6.400 6.400M295.700 447.550l-6.400 6.400"/></g><circle cx="292.500" cy="450.750" r="1.300" fill="#ff50b0"/><path d="M280.500 232.800l5 5M285.500 232.800l-5 5" stroke="#a8a4b0" stroke-width="1"/><g fill="none" stroke="#fff" stroke-width="1.100"><path d="M164.700 751.900V761.100H579.400V751.400" stroke-dasharray="4 2.500"/><path d="M194.400 751.400V741.500H549.500V751.400"/><path d="M203.200 731.400V741.500M541 731.400V741.500" stroke="#c0c0c0"/></g><circle cx="26.500" cy="737.700" r="5" fill="#ff0000"/><circle cx="26.500" cy="751" r="5" fill="#228b22"/><path d="M714 307.500H724.600V534.600H714" fill="none" stroke="#fff" stroke-width="1.300" stroke-dasharray="4 2.200"/></svg>
<span style="left:15.40px;top:64.00px;font-size:13px;line-height:13px;font-weight:bold;color:#fff;letter-spacing:0.451px;transform:scaleY(1.1);transform-origin:0 11px;">(4410) Kamuimintara</span>
<span style="left:158.20px;top:64.00px;font-size:13px;line-height:13px;font-weight:bold;color:#fff;letter-spacing:0.329px;transform:scaleY(1.1);transform-origin:0 11px;">2025 Aug 12</span>
<span style="left:249.20px;top:64.00px;font-size:13px;line-height:13px;font-weight:bold;color:#fff;letter-spacing:0.499px;transform:scaleY(1.1);transform-origin:0 11px;">14.5 km</span>
<span style="left:15.40px;top:79.00px;font-size:13px;line-height:13px;font-weight:bold;color:#fff;letter-spacing:0.298px;transform:scaleY(1.1);transform-origin:0 11px;">Geocentric</span>
<span style="left:94.20px;top:79.00px;font-size:13px;line-height:13px;font-weight:bold;color:#fff;transform:scaleY(1.1);transform-origin:0 11px;">X</span>
<span style="left:111.30px;top:79.00px;font-size:13.5px;line-height:13.5px;font-weight:bold;color:#fff;letter-spacing:0.498px;transform:scaleY(1.1);transform-origin:0 11px;">3624.7 ±0.5</span>
<span style="left:194.60px;top:79.00px;font-size:13px;line-height:13px;font-weight:bold;color:#fff;letter-spacing:0.451px;transform:scaleY(1.1);transform-origin:0 11px;">Y -831.6 ±0.6 km</span>
<span style="left:366.40px;top:75.00px;font-size:24px;line-height:24px;font-weight:bold;color:#fff;transform:scaleX(1.04);transform-origin:0 0;">N</span>
<span style="left:20.40px;top:415.00px;font-size:24px;line-height:24px;font-weight:bold;color:#fff;transform:scaleX(1.03);transform-origin:0 0;">E</span>
<span style="left:38.40px;top:731.00px;font-size:14.5px;line-height:14.5px;font-family:'Liberation Serif',serif;color:#fff;letter-spacing:0.415px;">Disappear</span>
<span style="left:38.40px;top:745.00px;font-size:14.5px;line-height:14.5px;font-family:'Liberation Serif',serif;color:#fff;letter-spacing:0.407px;">Reappear</span>
<span style="left:19.30px;top:766.00px;font-size:9.5px;line-height:9.5px;font-family:'Liberation Serif',serif;color:#fff;letter-spacing:-0.008px;">Occult 4.2025.8.23</span>
<span style="left:122.60px;top:766.00px;font-size:9.5px;line-height:9.5px;font-family:'Liberation Serif',serif;color:#fff;letter-spacing:0.006px;">Phase offset 0°</span>
<span style="left:232.00px;top:744.00px;font-size:10.5px;line-height:10.5px;font-family:'Liberation Serif',serif;color:#fff;letter-spacing:0.286px;">(Surface) Mean dia = 11.98 km</span>
<span style="left:373.40px;top:731.00px;font-size:10.5px;line-height:10.5px;font-family:'Liberation Serif',serif;color:#fff;letter-spacing:0.341px;">(Volume) Mean dia = 11.40 km</span>
<span style="left:353.00px;top:765.00px;font-size:12.5px;line-height:12.5px;font-family:'Liberation Serif',serif;font-style:italic;color:#fff;letter-spacing:-0.263px;">14.0 km</span>
<span style="left:626.00px;top:765.00px;font-size:12.5px;line-height:12.5px;font-family:'Liberation Serif',serif;color:#fff;letter-spacing:-0.310px;">Plot width: 24 km</span>
<div style="left:566.3px;top:112.3px;width:108.2px;height:15.4px;background:#fff;"></div>
<div style="left:597.5px;top:127.7px;width:77px;height:14.8px;background:#fff;"></div>
<div style="left:619.3px;top:142.5px;width:55.2px;height:13.9px;background:#fff;"></div>
<span style="left:569.00px;top:114.00px;font-size:11px;line-height:11px;color:#4a4aa4;letter-spacing:0.016px;">(4410) Kamuimintara</span>
<span style="left:599.00px;top:129.00px;font-size:11px;line-height:11px;color:#4a4aa4;letter-spacing:-0.118px;">DAMIT #12074</span>
<span style="left:621.50px;top:143.00px;font-size:11px;line-height:11px;color:#4a4aa4;letter-spacing:0.121px;">Sky Plane</span>
<svg style="left:12px;top:61px" width="716" height="716" viewBox="12 61 716 716"><path d="M11.300 322.700L728 93.600" stroke="#52089a" stroke-width="1.150" fill="none"/></svg>
<span style="left:284.50px;top:238.00px;font-size:9.5px;line-height:9.5px;font-weight:bold;color:#fff;">1</span>
<span style="left:139.50px;top:491.00px;font-size:9.5px;line-height:9.5px;font-weight:bold;color:#fff;">2</span>
<span style="left:562.50px;top:356.00px;font-size:9.5px;line-height:9.5px;font-weight:bold;color:#fff;">2</span>
<span style="left:294.50px;top:453.00px;font-size:9.5px;line-height:9.5px;font-weight:bold;color:#fff;">3</span>
<span style="left:305.50px;top:328.00px;font-size:12px;line-height:12px;font-weight:bold;color:#f01010;">N</span>
<span style="left:720.00px;top:405.00px;font-size:14px;line-height:14px;font-family:'Liberation Serif',serif;color:#fff;transform-origin:0 0;transform:rotate(90deg);">5 mas</span>
<div style="left:731px;top:61px;width:16px;height:716px;background:#f0f0f0;"></div>
<div style="left:731px;top:410px;width:10px;height:17px;background:#cdcdcd;"></div>
<svg style="left:731px;top:61px" width="16" height="716" viewBox="731 61 16 716" fill="none" stroke="#606060" stroke-width="1.6"><path d="M733 69.5l3.5-3.5l3.5 3.5"/><path d="M733 768l3.500 3.500l3.500-3.500"/></svg>
<div style="left:12px;top:779px;width:716px;height:12px;background:#f0f0f0;"></div>
<div style="left:352px;top:780px;width:17px;height:10px;background:#cdcdcd;"></div>
<svg style="left:12px;top:779px" width="716" height="12" viewBox="12 779 716 12" fill="none" stroke="#606060" stroke-width="1.6"><path d="M20.500 781.500l-3.500 3.500l3.500 3.500"/><path d="M719.500 781.500l3.500 3.500l-3.500 3.500"/></svg>
<div style="left:750px;top:64px;width:344px;height:714px;border:1px solid #dcdcdc;"></div>
<div style="left:757px;top:60px;width:58px;height:12px;background:#f0f0f0;"></div>
<span style="left:759.00px;top:60.00px;font-size:11px;line-height:11px;letter-spacing:-0.280px;">Find best fit</span>
<div style="left:759px;top:76px;width:32px;height:32px;background:#c0c0c0;border:1px solid #a4a4a4"></div>
<div style="left:760px;top:77px;width:30px;height:30px;border-style:solid;border-width:2px;border-color:#fff #808080 #808080 #fff;"></div>
<svg style="left:759px;top:76px" width="32" height="32" viewBox="0 0 32 32" shape-rendering="crispEdges"><g fill="#fff"><rect x="6" y="9" width="1" height="1"/><rect x="6" y="13" width="1" height="1"/><rect x="6" y="17" width="1" height="1"/><rect x="6" y="21" width="1" height="1"/><rect x="6" y="25" width="1" height="1"/><rect x="10" y="25" width="1" height="1"/><rect x="14" y="25" width="1" height="1"/><rect x="18" y="25" width="1" height="1"/><rect x="22" y="25" width="1" height="1"/><rect x="26" y="25" width="1" height="1"/><rect x="10" y="20" width="2" height="2"/><rect x="14" y="16" width="2" height="2"/><rect x="18" y="20" width="2" height="2"/><rect x="22" y="16" width="2" height="2"/><rect x="26" y="12" width="2" height="2"/></g><g fill="#000"><rect x="5" y="8" width="1" height="1"/><rect x="5" y="12" width="1" height="1"/><rect x="5" y="16" width="1" height="1"/><rect x="5" y="20" width="1" height="1"/><rect x="5" y="24" width="1" height="1"/><rect x="9" y="24" width="1" height="1"/><rect x="13" y="24" width="1" height="1"/><rect x="17" y="24" width="1" height="1"/><rect x="21" y="24" width="1" height="1"/><rect x="25" y="24" width="1" height="1"/><rect x="9" y="19" width="2" height="2"/><rect x="13" y="15" width="2" height="2"/><rect x="17" y="19" width="2" height="2"/><rect x="21" y="15" width="2" height="2"/><rect x="25" y="11" width="2" height="2"/></g><path d="M10 20L14 16L18 20L22 16L26 12" fill="none" stroke="#000" stroke-width="1" shape-rendering="auto"/></svg>
<span style="left:811.30px;top:75.00px;font-size:11px;line-height:11px;letter-spacing:-0.246px;">Center X</span>
<span style="left:811.30px;top:97.00px;font-size:11px;line-height:11px;letter-spacing:-0.217px;">Center Y</span>
<div class="ud" style="left:859px;top:69px;width:58px;height:20px"></div>
<div class="sp" style="left:901px;top:71px;width:14px;height:8px"></div>
<div class="sp" style="left:901px;top:79px;width:14px;height:8px"></div>
<svg style="left:901px;top:71px" width="14" height="16" viewBox="0 0 14 16"><path d="M4.500 5.500L7 2.500L9.500 5.500Z M4.500 10.500L7 13.500L9.500 10.500Z" fill="#000" stroke="#000" stroke-width="0.4"/></svg>
<span style="left:861.20px;top:73.00px;font-size:11.5px;line-height:11.5px;letter-spacing:-0.400px;transform:scaleY(1.1);transform-origin:0 9px;">0.0</span>
<div class="ud" style="left:859px;top:91px;width:58px;height:20px"></div>
<div class="sp" style="left:901px;top:93px;width:14px;height:8px"></div>
<div class="sp" style="left:901px;top:101px;width:14px;height:8px"></div>
<svg style="left:901px;top:93px" width="14" height="16" viewBox="0 0 14 16"><path d="M4.500 5.500L7 2.500L9.500 5.500Z M4.500 10.500L7 13.500L9.500 10.500Z" fill="#000" stroke="#000" stroke-width="0.4"/></svg>
<span style="left:861.20px;top:95.00px;font-size:11.5px;line-height:11.5px;letter-spacing:-0.400px;transform:scaleY(1.1);transform-origin:0 9px;">0.0</span>
<div class="cb" style="left:929px;top:72px"></div>
<svg style="left:929px;top:72px" width="13" height="13" viewBox="0 0 13 13"><path d="M2.600 6.600L5.200 9.300L10.600 3.400" fill="none" stroke="#2a2a2a" stroke-width="1.150"/></svg>
<div class="cb" style="left:929px;top:94px"></div>
<svg style="left:929px;top:94px" width="13" height="13" viewBox="0 0 13 13"><path d="M2.600 6.600L5.200 9.300L10.600 3.400" fill="none" stroke="#2a2a2a" stroke-width="1.150"/></svg>
<span style="left:947.60px;top:74.00px;font-size:11px;line-height:11px;letter-spacing:0.052px;">0.3</span>
<span style="left:948.00px;top:96.00px;font-size:11px;line-height:11px;letter-spacing:-0.323px;">-1.0</span>
<span style="left:990.40px;top:75.00px;font-size:11.0px;line-height:11.0px;letter-spacing:-0.417px;">Mass X</span>
<span style="left:990.40px;top:97.00px;font-size:11.0px;line-height:11.0px;letter-spacing:-0.377px;">Mass Y</span>
<div class="ud" style="left:1031px;top:69px;width:58px;height:20px"></div>
<div class="sp" style="left:1073px;top:71px;width:14px;height:8px"></div>
<div class="sp" style="left:1073px;top:79px;width:14px;height:8px"></div>
<svg style="left:1073px;top:71px" width="14" height="16" viewBox="0 0 14 16"><path d="M4.500 5.500L7 2.500L9.500 5.500Z M4.500 10.500L7 13.500L9.500 10.500Z" fill="#000" stroke="#000" stroke-width="0.4"/></svg>
<span style="left:1033.20px;top:73.00px;font-size:11.5px;line-height:11.5px;letter-spacing:-0.400px;transform:scaleY(1.1);transform-origin:0 9px;">0.0</span>
<div class="ud" style="left:1031px;top:91px;width:58px;height:20px"></div>
<div class="sp" style="left:1073px;top:93px;width:14px;height:8px"></div>
<div class="sp" style="left:1073px;top:101px;width:14px;height:8px"></div>
<svg style="left:1073px;top:93px" width="14" height="16" viewBox="0 0 14 16"><path d="M4.500 5.500L7 2.500L9.500 5.500Z M4.500 10.500L7 13.500L9.500 10.500Z" fill="#000" stroke="#000" stroke-width="0.4"/></svg>
<span style="left:1033.20px;top:95.00px;font-size:11.5px;line-height:11.5px;letter-spacing:-0.400px;transform:scaleY(1.1);transform-origin:0 9px;">0.0</span>
<span style="left:1023.00px;top:113.00px;font-size:8px;line-height:8px;color:#b4aeae;letter-spacing:-0.366px;">Shape model</span>
<div class="cbd" style="left:1074px;top:111px"></div>
<span style="left:783.00px;top:123.00px;font-size:11px;line-height:11px;letter-spacing:-0.369px;">Major axis (km)</span>
<span style="left:783.00px;top:145.00px;font-size:11px;line-height:11px;letter-spacing:-0.369px;">Minor axis (km)</span>
<span style="left:801.50px;top:167.00px;font-size:11px;line-height:11px;letter-spacing:-0.231px;">Orientation</span>
<div class="udd" style="left:859px;top:118px;width:58px;height:20px"></div>
<div class="sp" style="left:901px;top:120px;width:14px;height:8px"></div>
<div class="sp" style="left:901px;top:128px;width:14px;height:8px"></div>
<svg style="left:901px;top:120px" width="14" height="16" viewBox="0 0 14 16"><path d="M4.500 5.500L7 2.500L9.500 5.500Z M4.500 10.500L7 13.500L9.500 10.500Z" fill="#5a5a5a" stroke="#5a5a5a" stroke-width="0.4"/></svg>
<span style="left:861.20px;top:122.00px;font-size:10.5px;line-height:10.5px;color:#88889a;letter-spacing:-0.312px;transform:scaleY(1.1);transform-origin:0 9px;">14.5</span>
<div class="udd" style="left:859px;top:140px;width:58px;height:20px"></div>
<div class="sp" style="left:901px;top:142px;width:14px;height:8px"></div>
<div class="sp" style="left:901px;top:150px;width:14px;height:8px"></div>
<svg style="left:901px;top:142px" width="14" height="16" viewBox="0 0 14 16"><path d="M4.500 5.500L7 2.500L9.500 5.500Z M4.500 10.500L7 13.500L9.500 10.500Z" fill="#5a5a5a" stroke="#5a5a5a" stroke-width="0.4"/></svg>
<span style="left:861.20px;top:144.00px;font-size:10.5px;line-height:10.5px;color:#88889a;letter-spacing:-0.312px;transform:scaleY(1.1);transform-origin:0 9px;">14.5</span>
<div class="udd" style="left:859px;top:162px;width:58px;height:20px"></div>
<div class="sp" style="left:901px;top:164px;width:14px;height:8px"></div>
<div class="sp" style="left:901px;top:172px;width:14px;height:8px"></div>
<svg style="left:901px;top:164px" width="14" height="16" viewBox="0 0 14 16"><path d="M4.500 5.500L7 2.500L9.500 5.500Z M4.500 10.500L7 13.500L9.500 10.500Z" fill="#5a5a5a" stroke="#5a5a5a" stroke-width="0.4"/></svg>
<span style="left:861.20px;top:166.00px;font-size:11.5px;line-height:11.5px;color:#88889a;letter-spacing:-0.400px;transform:scaleY(1.1);transform-origin:0 9px;">0.0</span>
<div class="cbd" style="left:929px;top:121px"></div>
<div class="cbd" style="left:929px;top:143px"></div>
<div class="cbd" style="left:929px;top:165px"></div>
<span style="left:948.00px;top:123.00px;font-size:11px;line-height:11px;color:#a8a8a8;letter-spacing:-0.148px;">0.0</span>
<span style="left:948.00px;top:145.00px;font-size:11px;line-height:11px;color:#a8a8a8;letter-spacing:-0.148px;">0.0</span>
<span style="left:948.00px;top:167.00px;font-size:11px;line-height:11px;color:#a8a8a8;letter-spacing:-0.148px;">0.0</span>
<span style="left:1005.00px;top:127.00px;font-size:11px;line-height:11px;color:#0a6a0a;letter-spacing:-0.312px;">dia = 14.5 km</span>
<span style="left:986.00px;top:141.00px;font-size:11px;line-height:11px;color:#1010f0;letter-spacing:-0.123px;">a/b: 1.00, dMag: 0.00</span>
<span style="left:990.40px;top:171.00px;font-size:11px;line-height:11px;letter-spacing:-0.264px;">Motion: 6.67 km/s</span>
<div style="left:926px;top:181px;width:19px;height:8px;background:#f0f0f0;border:1px solid #b8b8b8;"></div>
<div style="left:929px;top:184px;width:13px;height:2px;background:#f00000;"></div>
<div class="cb" style="left:763px;top:192px"></div>
<svg style="left:763px;top:192px" width="13" height="13" viewBox="0 0 13 13"><path d="M2.600 6.600L5.200 9.300L10.600 3.400" fill="none" stroke="#2a2a2a" stroke-width="1.150"/></svg>
<span style="left:781.60px;top:194.00px;font-size:11px;line-height:11px;letter-spacing:-0.358px;">Circular</span>
<div class="cb" style="left:829px;top:192px"></div>
<svg style="left:829px;top:192px" width="13" height="13" viewBox="0 0 13 13"><path d="M2.600 6.600L5.200 9.300L10.600 3.400" fill="none" stroke="#2a2a2a" stroke-width="1.150"/></svg>
<span style="left:848.00px;top:187.00px;font-size:11px;line-height:11px;letter-spacing:-0.477px;">Use assumed</span>
<span style="left:848.00px;top:200.00px;font-size:11px;line-height:11px;letter-spacing:-0.350px;">dia (14.5 km)</span>
<div class="cb" style="left:931px;top:192px"></div>
<svg style="left:931px;top:192px" width="13" height="13" viewBox="0 0 13 13"><path d="M2.600 6.600L5.200 9.300L10.600 3.400" fill="none" stroke="#2a2a2a" stroke-width="1.150"/></svg>
<span style="left:950.00px;top:194.00px;font-size:11.5px;line-height:11.5px;letter-spacing:-0.422px;">Include Miss events</span>
<div class="sunk" style="left:761px;top:218px;width:322px;height:21px;background:#f0f0f0"></div>
<span style="left:769.60px;top:223.00px;font-size:12px;line-height:12px;font-weight:bold;color:#a4a4a4;letter-spacing:-0.174px;">Double stars - show</span>
<div class="rbd" style="left:894.7px;top:223.3px"></div>
<div style="left:897.7px;top:226.3px;width:7px;height:7px;border-radius:50%;background:#c8c8c8"></div>
<span style="left:913.00px;top:226.00px;font-size:9.5px;line-height:9.5px;color:#a8a8a8;letter-spacing:-0.349px;">Both</span>
<div class="rbd" style="left:946.9px;top:223.0px"></div>
<span style="left:964.70px;top:226.00px;font-size:9.5px;line-height:9.5px;color:#a8a8a8;letter-spacing:-0.072px;">Primary</span>
<div class="rbd" style="left:1012.0px;top:223.0px"></div>
<span style="left:1030.00px;top:226.00px;font-size:9.5px;line-height:9.5px;color:#a8a8a8;letter-spacing:-0.178px;">Secondary</span>
<span style="left:761.70px;top:250.00px;font-size:12px;line-height:12px;font-weight:bold;color:#006400;letter-spacing:-0.061px;">Quality of the fit</span>
<div style="left:862px;top:245px;width:214px;height:21px;background:#fff;border:1px solid #7a7a7a"></div>
<span style="left:865.60px;top:250.00px;font-size:11px;line-height:11px;letter-spacing:-0.313px;">Astrometry only. No reliable size</span>
<svg style="left:1060px;top:250px" width="14" height="10" viewBox="0 0 14 10"><path d="M2.500 3l4.500 4.500l4.500-4.500" fill="none" stroke="#404040" stroke-width="1.100"/></svg>
<div style="left:862px;top:269px;width:125px;height:17px;background:#add8e6;"></div>
<div class="cb" style="left:862.5px;top:270px"></div>
<span style="left:882.00px;top:272.00px;font-size:11px;line-height:11px;font-style:italic;letter-spacing:-0.230px;">Flag for future review</span>
<div class="sunk" style="left:752px;top:289px;width:339px;height:82px;background:#f0ffff"></div>
<span style="left:760.30px;top:306.00px;font-size:11px;line-height:11px;font-weight:bold;color:#6e0a32;">P</span>
<span style="left:760.90px;top:320.00px;font-size:11px;line-height:11px;font-weight:bold;color:#6e0a32;">L</span>
<span style="left:760.30px;top:333.00px;font-size:11px;line-height:11px;font-weight:bold;color:#6e0a32;">O</span>
<span style="left:760.90px;top:346.00px;font-size:11px;line-height:11px;font-weight:bold;color:#6e0a32;">T</span>
<span style="left:780.70px;top:303.00px;font-size:11.5px;line-height:11.5px;font-weight:bold;color:#6e0a32;letter-spacing:0.309px;">Scale</span>
<span style="left:780.70px;top:328.00px;font-size:11.5px;line-height:11.5px;font-weight:bold;color:#6e0a32;letter-spacing:-0.072px;">Size</span>
<span style="left:781.60px;top:354.00px;font-size:11.5px;line-height:11.5px;font-weight:bold;color:#6e0a32;letter-spacing:0.232px;">Scroll range x1.25</span>
<div class="cb" style="left:892px;top:353px"></div>
<div style="left:819px;top:298px;width:269px;height:19px;background:#fffacd;"></div>
<div style="left:824px;top:303px;width:258px;height:4px;background:#e7eaea;border:1px solid #d2d2d2;"></div>
<div class="tk" style="left:827.3px;top:313px;height:4px"></div>
<div class="tk" style="left:839.9px;top:313px;height:3px"></div>
<div class="tk" style="left:852.5px;top:313px;height:3px"></div>
<div class="tk" style="left:865.1px;top:313px;height:3px"></div>
<div class="tk" style="left:877.7px;top:313px;height:3px"></div>
<div class="tk" style="left:890.3px;top:313px;height:3px"></div>
<div class="tk" style="left:903.0px;top:313px;height:3px"></div>
<div class="tk" style="left:915.6px;top:313px;height:3px"></div>
<div class="tk" style="left:928.2px;top:313px;height:3px"></div>
<div class="tk" style="left:940.8px;top:313px;height:3px"></div>
<div class="tk" style="left:953.4px;top:313px;height:3px"></div>
<div class="tk" style="left:966.0px;top:313px;height:3px"></div>
<div class="tk" style="left:978.6px;top:313px;height:3px"></div>
<div class="tk" style="left:991.2px;top:313px;height:3px"></div>
<div class="tk" style="left:1003.8px;top:313px;height:3px"></div>
<div class="tk" style="left:1016.4px;top:313px;height:3px"></div>
<div class="tk" style="left:1029.1px;top:313px;height:3px"></div>
<div class="tk" style="left:1041.7px;top:313px;height:3px"></div>
<div class="tk" style="left:1054.3px;top:313px;height:3px"></div>
<div class="tk" style="left:1066.9px;top:313px;height:3px"></div>
<div class="tk" style="left:1079.5px;top:313px;height:4px"></div>
<svg style="left:949px;top:300px" width="8" height="11" viewBox="0 0 8 11"><path d="M1 0.500h6v6.500l-3 3.500l-3-3.500z" fill="#0078d7"/></svg>
<div class="sunk" style="left:810px;top:323px;width:163px;height:23px;background:#f0fff0"></div>
<div class="rb" style="left:819.8px;top:328.3px"></div>
<div style="left:822.8px;top:331.3px;width:7px;height:7px;border-radius:50%;background:#222"></div>
<span style="left:839.00px;top:329.00px;font-size:11.5px;line-height:11.5px;font-weight:bold;color:#6e0a32;letter-spacing:-0.469px;">normal</span>
<div class="rb" style="left:883.8px;top:328.3px"></div>
<span style="left:903.00px;top:329.00px;font-size:11.5px;line-height:11.5px;font-weight:bold;color:#6e0a32;letter-spacing:0.500px;">x 2</span>
<div class="rb" style="left:928.0px;top:328.3px"></div>
<span style="left:946.50px;top:328.00px;font-size:12.5px;line-height:12.5px;font-weight:bold;color:#6e0a32;letter-spacing:0.305px;">x 5</span>
<span style="left:995.60px;top:330.00px;font-size:11.5px;line-height:11.5px;font-weight:bold;color:#800080;letter-spacing:-0.120px;">Form opacity</span>
<div style="left:974px;top:346px;width:115px;height:21px;background:#fffacd;"></div>
<div style="left:980px;top:352px;width:98px;height:4px;background:#e7eaea;border:1px solid #d2d2d2;"></div>
<div class="tk" style="left:984.2px;top:362px;height:4px"></div>
<div class="tk" style="left:1003.5px;top:362px;height:4px"></div>
<div class="tk" style="left:1022.4px;top:362px;height:4px"></div>
<div class="tk" style="left:1040.5px;top:362px;height:4px"></div>
<div class="tk" style="left:1059.5px;top:362px;height:4px"></div>
<div class="tk" style="left:1078.3px;top:362px;height:4px"></div>
<svg style="left:1073px;top:348px" width="10" height="14" viewBox="0 0 10 14"><path d="M1 0h8v9.500l-4 3.500l-4-3.500z" fill="#0078d7"/></svg>
<span style="left:766.00px;top:383.00px;font-size:11px;line-height:11px;letter-spacing:-0.220px;">RMS fit -0.2 ±0.6 km</span>
<div class="sunk" style="left:758px;top:402px;width:328px;height:300px;background:#fff"></div>
<div style="left:765px;top:410px;width:66px;height:2px;background:#4b0082;"></div>
<div style="left:765px;top:422px;width:66px;height:2px;background:#f00000;"></div>
<div style="left:765.7px;top:433.8px;width:3.6px;height:3.6px;border-radius:50%;border:1px solid #ff70b8"></div>
<div style="left:780.7px;top:433.8px;width:3.6px;height:3.6px;border-radius:50%;border:1px solid #ff70b8"></div>
<div style="left:795.6px;top:433.8px;width:3.6px;height:3.6px;border-radius:50%;border:1px solid #ff70b8"></div>
<div style="left:810.7px;top:433.8px;width:3.6px;height:3.6px;border-radius:50%;border:1px solid #ff70b8"></div>
<div style="left:825.9px;top:433.8px;width:3.6px;height:3.6px;border-radius:50%;border:1px solid #ff70b8"></div>
<span style="left:854.00px;top:406.00px;font-size:13.67px;line-height:13.67px;font-family:'Liberation Mono',monospace;letter-spacing:0.020px;transform:scaleY(0.8);transform-origin:0 10.480px;">1(M) M Camilleri, near Auckl</span>
<span style="left:854.00px;top:418.00px;font-size:13.67px;line-height:13.67px;font-family:'Liberation Mono',monospace;transform:scaleY(0.8);transform-origin:0 10.480px;">2    V Bao, near Auckland</span>
<span style="left:854.00px;top:430.00px;font-size:13.67px;line-height:13.67px;font-family:'Liberation Mono',monospace;letter-spacing:-0.018px;transform:scaleY(0.8);transform-origin:0 10.480px;">3(P) Predicted</span>
<div style="left:672px;top:631px;width:450px;height:132px;background:#b0c4de;border:1px solid #66707c;"></div>
<span style="left:674.60px;top:639.00px;font-size:12.0px;line-height:12.0px;font-weight:bold;color:#1c3568;letter-spacing:-0.150px;">DAMIT</span>
<div style="left:718.5px;top:634.5px;width:15.5px;height:18px;background:#e2e4e6;border:1px solid #b0b4b8;"></div>
<div style="left:721.3px;top:637.3px;width:10px;height:12.5px;background:#00f000;"></div>
<span style="left:723.20px;top:639.00px;font-size:11.5px;line-height:11.5px;font-weight:bold;">1</span>
<div class="nb" style="left:736.5px;top:634.5px;width:15.5px;height:18px"></div>
<span style="left:741.10px;top:639.00px;font-size:11px;line-height:11px;color:#a2a2a2;">2</span>
<div class="nb" style="left:754.5px;top:634.5px;width:15.5px;height:18px"></div>
<span style="left:759.10px;top:639.00px;font-size:11px;line-height:11px;color:#a2a2a2;">3</span>
<div class="nb" style="left:772px;top:634.5px;width:15.5px;height:18px"></div>
<span style="left:776.60px;top:639.00px;font-size:11px;line-height:11px;color:#a2a2a2;">4</span>
<div class="nb" style="left:790px;top:634.5px;width:15.5px;height:18px"></div>
<span style="left:794.60px;top:639.00px;font-size:11px;line-height:11px;color:#a2a2a2;">5</span>
<div class="nb" style="left:808px;top:634.5px;width:15.5px;height:18px"></div>
<span style="left:812.60px;top:639.00px;font-size:11px;line-height:11px;color:#a2a2a2;">6</span>
<div style="left:830px;top:634.5px;width:70px;height:18px;background:#b0e6ee;border:2px solid #ccd6dc;"></div>
<span style="left:836.00px;top:639.00px;font-size:11px;line-height:11px;letter-spacing:-0.256px;">Light curves</span>
<span style="left:906.70px;top:639.00px;font-size:12.0px;line-height:12.0px;font-weight:bold;color:#1c3568;letter-spacing:-0.367px;">ISAM</span>
<div class="nb" style="left:942.5px;top:634.5px;width:15.5px;height:18px"></div>
<span style="left:947.10px;top:639.00px;font-size:11px;line-height:11px;color:#a2a2a2;">1</span>
<div class="nb" style="left:966px;top:634.5px;width:15.5px;height:18px"></div>
<span style="left:970.60px;top:639.00px;font-size:11px;line-height:11px;color:#a2a2a2;">2</span>
<div class="nb" style="left:990px;top:634.5px;width:15.5px;height:18px"></div>
<span style="left:994.60px;top:639.00px;font-size:11px;line-height:11px;color:#a2a2a2;">3</span>
<div class="nb" style="left:1014.5px;top:634.5px;width:15.5px;height:18px"></div>
<span style="left:1019.10px;top:639.00px;font-size:11px;line-height:11px;color:#a2a2a2;">4</span>
<div class="nb" style="left:1038px;top:634.5px;width:15.5px;height:18px"></div>
<span style="left:1042.60px;top:639.00px;font-size:11px;line-height:11px;color:#a2a2a2;">5</span>
<div class="nb" style="left:1062px;top:634.5px;width:15.5px;height:18px"></div>
<span style="left:1066.60px;top:639.00px;font-size:11px;line-height:11px;color:#a2a2a2;">6</span>
<div style="left:1086.5px;top:633.5px;width:15px;height:17.5px;background:#e2e4e8;border:1px solid #b4b8c0;"></div>
<div style="left:1089px;top:636px;width:10px;height:12.5px;background:#3c48d0;"></div>
<span style="left:1090.20px;top:637.00px;font-size:12px;line-height:12px;font-weight:bold;color:#ffee00;">?</span>
<div style="left:1103px;top:633.5px;width:15.5px;height:17.5px;background:#e2e4e8;border:1px solid #b4b8c0;"></div>
<div style="left:1105.2px;top:636px;width:10.8px;height:12.5px;background:#dc143c;"></div>
<span style="left:1107.30px;top:638.00px;font-size:11.5px;line-height:11.5px;font-weight:bold;color:#fff;">X</span>
<span style="left:680.00px;top:656.00px;font-size:11px;line-height:11px;color:#2c4a6a;letter-spacing:-0.372px;">Source</span>
<span style="left:738.70px;top:656.00px;font-size:10.5px;line-height:10.5px;color:#2c4a6a;letter-spacing:-0.200px;">ID</span>
<span style="left:773.00px;top:656.00px;font-size:11px;line-height:11px;color:#2c4a6a;">Surf/Vol</span>
<div class="tb" style="left:677.5px;top:668.7px;width:39px;height:17.600px"></div>
<div class="tb" style="left:718.3px;top:668.7px;width:53.200px;height:17.600px"></div>
<div class="tb" style="left:773.5px;top:668.7px;width:38.200px;height:17.600px"></div>
<span style="left:680.50px;top:673.00px;font-size:10.5px;line-height:10.5px;letter-spacing:-0.368px;">DAMIT</span>
<span style="left:721.00px;top:673.00px;font-size:10.5px;line-height:10.5px;letter-spacing:-0.176px;">12074</span>
<span style="left:777.00px;top:673.00px;font-size:10.5px;line-height:10.5px;letter-spacing:-0.320px;">1.051</span>
<div class="sunk" style="left:813px;top:654px;width:303.500px;height:50.600px;background:#fffacd"></div>
<span style="left:837.00px;top:657.00px;font-size:11px;line-height:11px;letter-spacing:-0.408px;">Fit quality</span>
<div style="left:816.5px;top:669.3px;width:96.500px;height:20.200px;background:#fff;border:1px solid #6a6a6a"></div>
<span style="left:819.50px;top:673.00px;font-size:10.5px;line-height:10.5px;letter-spacing:-0.302px;">Minimum dia</span>
<svg style="left:897px;top:675px" width="14" height="10" viewBox="0 0 14 10"><path d="M2.500 2.500l4.500 4.500l4.500-4.500" fill="none" stroke="#404040" stroke-width="1.100"/></svg>
<span style="left:818.70px;top:691.00px;font-size:10.5px;line-height:10.5px;color:#800080;letter-spacing:-0.322px;">Minimum dia</span>
<span style="left:915.30px;top:657.00px;font-size:10.5px;line-height:10.5px;letter-spacing:-0.331px;">Ph Corrn</span>
<div class="tb" style="left:917px;top:669.7px;width:39px;height:18px"></div>
<span style="left:920.00px;top:673.00px;font-size:11px;line-height:11px;">0°</span>
<span style="left:919.00px;top:691.00px;font-size:11px;line-height:11px;color:#800080;">0°</span>
<span style="left:966.40px;top:657.00px;font-size:10.5px;line-height:10.5px;letter-spacing:-0.292px;">Minimum dia</span>
<div class="tb" style="left:963px;top:669.7px;width:39px;height:18.300px"></div>
<span style="left:966.60px;top:673.00px;font-size:11.5px;line-height:11.5px;letter-spacing:-0.377px;">11.4</span>
<div style="left:1003.2px;top:669.3px;width:31px;height:23.4px;background:#e2e2e0;border:1px solid #b0b0ac;"></div>
<div style="left:1006.2px;top:672px;width:25px;height:18px;background:#adff2f;"></div>
<span style="left:1010.00px;top:676.00px;font-size:10.5px;line-height:10.5px;letter-spacing:-0.383px;">Set</span>
<span style="left:966.00px;top:692.00px;font-size:11px;line-height:11px;color:#800080;letter-spacing:-0.198px;">11.4</span>
<span style="left:1042.40px;top:657.00px;font-size:10.5px;line-height:10.5px;letter-spacing:-0.284px;">Maximum dia</span>
<div class="tb" style="left:1041px;top:669.500px;width:38.700px;height:19px;background:#ffc0cb;border-color:#707070;box-shadow:inset 0 0 0 1px #fff"></div>
<div style="left:1081px;top:669.3px;width:31px;height:23.4px;background:#e2e2e0;border:1px solid #b0b0ac;"></div>
<div style="left:1084px;top:672px;width:25px;height:18px;background:#adff2f;"></div>
<span style="left:1087.50px;top:676.00px;font-size:10.5px;line-height:10.5px;letter-spacing:-0.383px;">Set</span>
<div style="left:1044px;top:696.6px;width:2.6px;height:1.3px;background:#2a0a8a;"></div>
<div style="left:1050px;top:696.6px;width:2.6px;height:1.3px;background:#2a0a8a;"></div>
<div style="left:1056px;top:696.6px;width:2.6px;height:1.3px;background:#2a0a8a;"></div>
<div style="left:1062px;top:696.6px;width:2.6px;height:1.3px;background:#2a0a8a;"></div>
<div style="left:675.4px;top:688.3px;width:33.6px;height:20.7px;background:#ffff00;border:1px solid #404040;"></div>
<span style="left:682.40px;top:693.00px;font-size:12.0px;line-height:12.0px;font-weight:bold;letter-spacing:-0.294px;">Dia</span>
<span style="left:712.60px;top:691.00px;font-size:11.0px;line-height:11.0px;font-style:italic;color:#2c4a6a;letter-spacing:-0.452px;">Values in memory =&gt;</span>
<span style="left:680.00px;top:711.00px;font-size:11px;line-height:11px;color:#2c4a6a;letter-spacing:-0.317px;">Version info</span>
<div class="tb" style="left:740px;top:708.4px;width:269.700px;height:18px"></div>
<span style="left:743.00px;top:713.00px;font-size:11px;line-height:11px;letter-spacing:-0.262px;">2022-11-29, Q=1</span>
<span style="left:679.40px;top:736.00px;font-size:11px;line-height:11px;color:#2c4a6a;letter-spacing:-0.371px;">Image scale</span>
<div style="left:741px;top:733px;width:269.3px;height:22.4px;background:#fffacd;"></div>
<div class="tk" style="left:751.2px;top:738px;height:4px;background:#b8b8b0"></div>
<div class="tk" style="left:757.3px;top:738px;height:4px;background:#b8b8b0"></div>
<div class="tk" style="left:763.3px;top:738px;height:4px;background:#b8b8b0"></div>
<div class="tk" style="left:769.4px;top:738px;height:4px;background:#b8b8b0"></div>
<div class="tk" style="left:775.5px;top:738px;height:4px;background:#b8b8b0"></div>
<div class="tk" style="left:781.5px;top:738px;height:4px;background:#b8b8b0"></div>
<div class="tk" style="left:787.6px;top:738px;height:4px;background:#b8b8b0"></div>
<div class="tk" style="left:793.6px;top:738px;height:4px;background:#b8b8b0"></div>
<div class="tk" style="left:799.7px;top:738px;height:4px;background:#b8b8b0"></div>
<div class="tk" style="left:805.8px;top:738px;height:4px;background:#b8b8b0"></div>
<div class="tk" style="left:811.8px;top:738px;height:4px;background:#b8b8b0"></div>
<div class="tk" style="left:817.9px;top:738px;height:4px;background:#b8b8b0"></div>
<div class="tk" style="left:824.0px;top:738px;height:4px;background:#b8b8b0"></div>
<div class="tk" style="left:830.0px;top:738px;height:4px;background:#b8b8b0"></div>
<div class="tk" style="left:836.1px;top:738px;height:4px;background:#b8b8b0"></div>
<div class="tk" style="left:842.1px;top:738px;height:4px;background:#b8b8b0"></div>
<div class="tk" style="left:848.2px;top:738px;height:4px;background:#b8b8b0"></div>
<div class="tk" style="left:854.3px;top:738px;height:4px;background:#b8b8b0"></div>
<div class="tk" style="left:860.3px;top:738px;height:4px;background:#b8b8b0"></div>
<div class="tk" style="left:866.4px;top:738px;height:4px;background:#b8b8b0"></div>
<div class="tk" style="left:872.5px;top:738px;height:4px;background:#b8b8b0"></div>
<div class="tk" style="left:878.5px;top:738px;height:4px;background:#b8b8b0"></div>
<div class="tk" style="left:884.6px;top:738px;height:4px;background:#b8b8b0"></div>
<div class="tk" style="left:890.6px;top:738px;height:4px;background:#b8b8b0"></div>
<div class="tk" style="left:896.7px;top:738px;height:4px;background:#b8b8b0"></div>
<div class="tk" style="left:902.8px;top:738px;height:4px;background:#b8b8b0"></div>
<div class="tk" style="left:908.8px;top:738px;height:4px;background:#b8b8b0"></div>
<div class="tk" style="left:914.9px;top:738px;height:4px;background:#b8b8b0"></div>
<div class="tk" style="left:921.0px;top:738px;height:4px;background:#b8b8b0"></div>
<div class="tk" style="left:927.0px;top:738px;height:4px;background:#b8b8b0"></div>
<div class="tk" style="left:933.1px;top:738px;height:4px;background:#b8b8b0"></div>
<div class="tk" style="left:939.2px;top:738px;height:4px;background:#b8b8b0"></div>
<div class="tk" style="left:945.2px;top:738px;height:4px;background:#b8b8b0"></div>
<div class="tk" style="left:951.3px;top:738px;height:4px;background:#b8b8b0"></div>
<div class="tk" style="left:957.3px;top:738px;height:4px;background:#b8b8b0"></div>
<div class="tk" style="left:963.4px;top:738px;height:4px;background:#b8b8b0"></div>
<div class="tk" style="left:969.5px;top:738px;height:4px;background:#b8b8b0"></div>
<div class="tk" style="left:975.5px;top:738px;height:4px;background:#b8b8b0"></div>
<div class="tk" style="left:981.6px;top:738px;height:4px;background:#b8b8b0"></div>
<div class="tk" style="left:987.7px;top:738px;height:4px;background:#b8b8b0"></div>
<div class="tk" style="left:993.7px;top:738px;height:4px;background:#b8b8b0"></div>
<div class="tk" style="left:999.8px;top:738px;height:4px;background:#b8b8b0"></div>
<div style="left:747.5px;top:749.5px;width:255px;height:3.5px;background:#e7eaea;border:1px solid #d2d2d2;"></div>
<svg style="left:901.500px;top:744px" width="9" height="11" viewBox="0 0 9 11"><path d="M0.500 11v-7.500l4-3.500l4 3.500v7.500z" fill="#0078d7"/></svg>
<div style="left:1019.6px;top:711.5px;width:97px;height:46px;background:#ffc0cb;border:2px solid #c4c4c4;"></div>
<span style="left:1030.50px;top:722.00px;font-size:12.5px;line-height:12.5px;font-weight:bold;color:#a0001e;letter-spacing:-0.044px;">Save/update</span>
<span style="left:1031.00px;top:735.00px;font-size:12.5px;line-height:12.5px;font-weight:bold;color:#a0001e;letter-spacing:-0.305px;">model 12074</span>
</div></body></html>
